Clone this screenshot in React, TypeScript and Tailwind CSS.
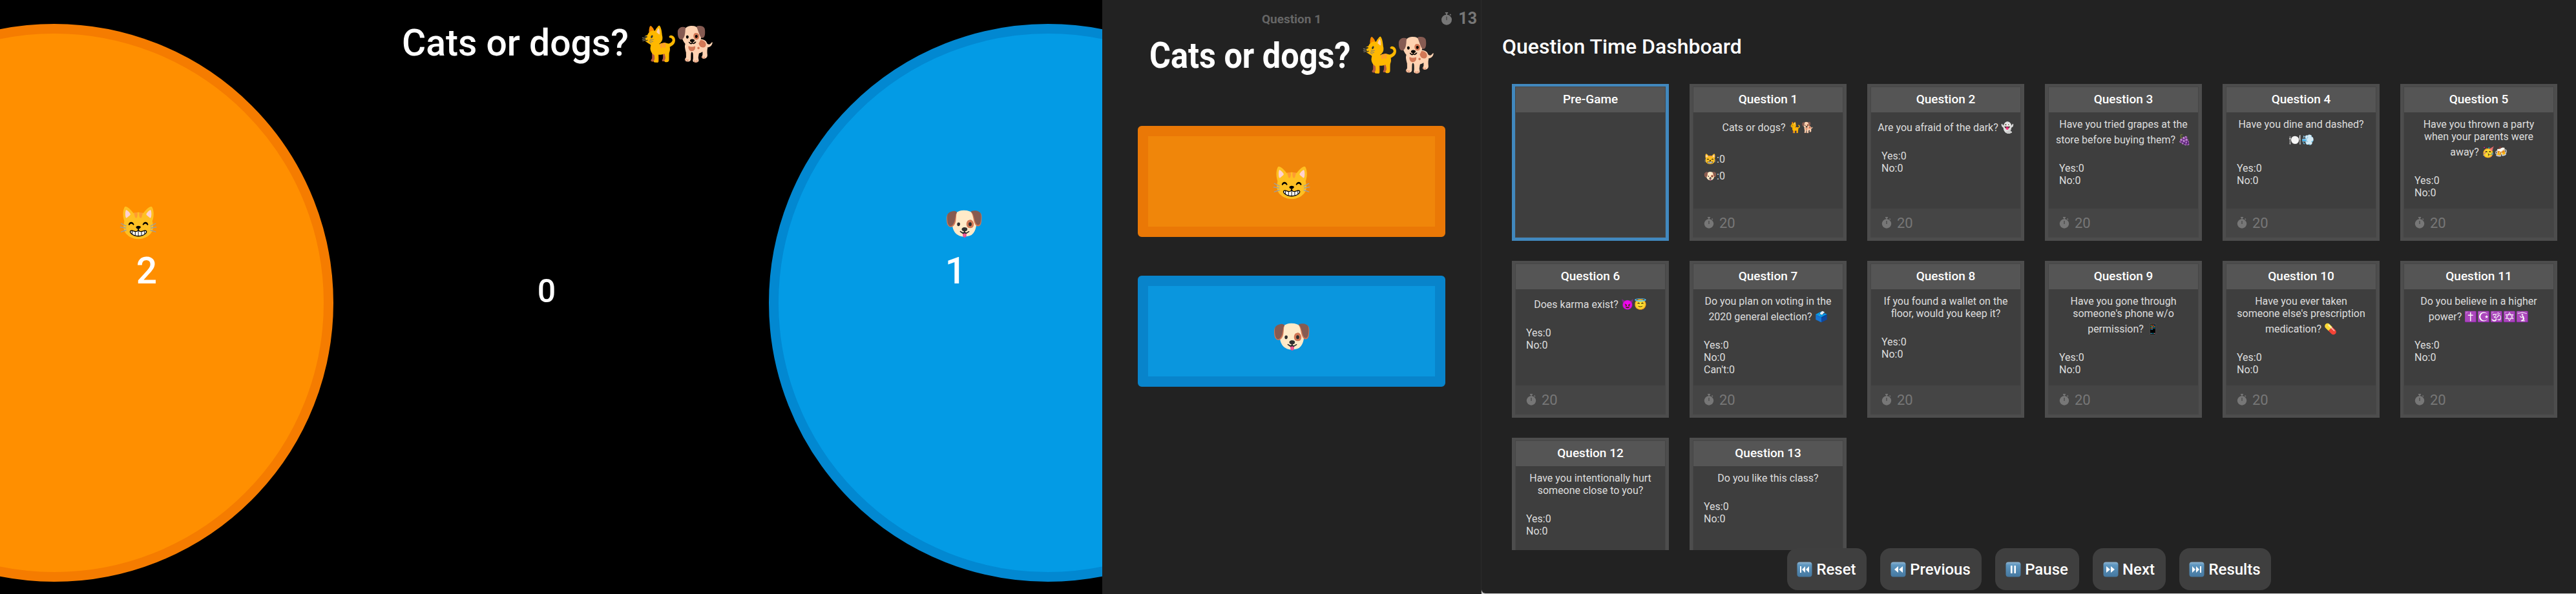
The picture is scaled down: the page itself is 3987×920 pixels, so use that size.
type Question = {
  title: string
  text: string
  emoji?: string
  options: string[]
}

const QUESTIONS: Question[] = [
  { title: 'Pre-Game', text: '', options: [] },
  { title: 'Question 1', text: 'Cats or dogs?', emoji: '🐈🐕', options: ['😸', '🐶'] },
  { title: 'Question 2', text: 'Are you afraid of the dark?', emoji: '👻', options: ['Yes', 'No'] },
  { title: 'Question 3', text: 'Have you tried grapes at the store before buying them?', emoji: '🍇', options: ['Yes', 'No'] },
  { title: 'Question 4', text: 'Have you dine and dashed?', emoji: '🍽️💨', options: ['Yes', 'No'] },
  { title: 'Question 5', text: 'Have you thrown a party when your parents were away?', emoji: '🥳🍻', options: ['Yes', 'No'] },
  { title: 'Question 6', text: 'Does karma exist?', emoji: '😈😇', options: ['Yes', 'No'] },
  { title: 'Question 7', text: 'Do you plan on voting in the 2020 general election?', emoji: '🗳️', options: ['Yes', 'No', "Can't"] },
  { title: 'Question 8', text: 'If you found a wallet on the floor, would you keep it?', options: ['Yes', 'No'] },
  { title: 'Question 9', text: "Have you gone through someone's phone w/o permission?", emoji: '📱', options: ['Yes', 'No'] },
  { title: 'Question 10', text: "Have you ever taken someone else's prescription medication?", emoji: '💊', options: ['Yes', 'No'] },
  { title: 'Question 11', text: 'Do you believe in a higher power?', emoji: '✝️☪️🕉️✡️🛐', options: ['Yes', 'No'] },
  { title: 'Question 12', text: 'Have you intentionally hurt someone close to you?', options: ['Yes', 'No'] },
  { title: 'Question 13', text: 'Do you like this class?', options: ['Yes', 'No'] },
]

function Stopwatch({ size }: { size: number }) {
  return (
    <svg width={size} height={size} viewBox="0 0 18 18" className="shrink-0">
      <rect x="7" y="0" width="4" height="1.6" fill="currentColor" />
      <rect x="8.2" y="1" width="1.6" height="2.6" fill="currentColor" />
      <rect x="13.2" y="2.6" width="2" height="1.6" rx="0.5" transform="rotate(40 14.2 3.4)" fill="currentColor" />
      <circle cx="9" cy="10.5" r="7.2" fill="currentColor" />
      <rect x="8.5" y="6" width="1" height="5" fill="#3a3a3a" />
    </svg>
  )
}

// media key icon, the blue square in front of the dashboard controls
function MediaKey({ kind }: { kind: 'reset' | 'prev' | 'pause' | 'next' | 'results' }) {
  return (
    <svg width="24" height="24" viewBox="0 0 24 24" className="shrink-0">
      <defs>
        <linearGradient id={`key-${kind}`} x1="0" y1="0" x2="0" y2="1">
          <stop offset="0" stopColor="#8fb4d0" />
          <stop offset="0.2" stopColor="#5f97c0" />
          <stop offset="1" stopColor="#44779f" />
        </linearGradient>
      </defs>
      <rect x="0.5" y="0.5" width="23" height="23" rx="4" fill={`url(#key-${kind})`} />
      {kind === 'reset' && <path d="M5 7h2v10H5zM13 7v10l-5-5zM19 7v10l-5-5z" fill="#fff" />}
      {kind === 'prev' && <path d="M12 7v10l-6-5zM19 7v10l-6-5z" fill="#fff" />}
      {kind === 'pause' && <path d="M8 6h2.6v12H8zM13.4 6H16v12h-2.6z" fill="#fff" />}
      {kind === 'next' && <path d="M5 7v10l6-5zM12 7v10l6-5z" fill="#fff" />}
      {kind === 'results' && <path d="M5 7v10l5-5zM11 7v10l5-5zM17 7h2v10h-2z" fill="#fff" />}
    </svg>
  )
}

function QuestionCard({ q, active }: { q: Question; active?: boolean }) {
  const isPre = q.title === 'Pre-Game'
  return (
    <div className={`h-[243px] border-[5px] border-t-4 ${active ? 'border-[#4188be]' : 'border-[#4d4d4d]'}`}>
      <div className="flex h-full flex-col border border-[#464646] bg-[#3e3e3e]">
        <div className="flex h-[39px] shrink-0 items-center justify-center bg-[#555555] text-[19px] font-medium text-white">
          {q.title}
        </div>
        <div className="flex-1 overflow-hidden px-[10px] pt-[9px] text-[16px] leading-[19px] text-[#dddddd]">
          {q.text && (
            <p className="mb-[25px] text-center">
              {q.text}{' '}
              {q.emoji && (
                <span className="whitespace-nowrap">
                  {/* emoji lines sit 5px taller than plain lines */}
                  <span className="inline-block h-[20px] w-0" />
                  {q.emoji}
                </span>
              )}
            </p>
          )}
          <div className="pl-[6px]">
            {q.options.map(o =>
              o === '😸' || o === '🐶' ? (
                <div key={o} className="h-[26px] translate-y-[2px] leading-[26px]">{o}:0</div>
              ) : (
                <div key={o}>{o}:0</div>
              ),
            )}
          </div>
        </div>
        {!isPre && (
          <div className="flex h-[44px] shrink-0 items-center gap-[7px] bg-[#454545] pl-[15px] text-[22px] text-[#777777]">
            <Stopwatch size={18} />
            <span>20</span>
          </div>
        )}
      </div>
    </div>
  )
}

function Circle({ color, emoji, count, side }: { color: string; emoji: string; count: number; side: 'left' | 'right' }) {
  return (
    <div
      className={`flex h-[864px] w-[864px] shrink-0 flex-col items-center justify-center rounded-full border-[15px] pb-[172px] ${color} ${
        side === 'left' ? 'pl-[260px]' : 'pr-[260px]'
      }`}
    >
      <span className="text-[50px] leading-[60px]">{emoji}</span>
      <span className={`mt-[14px] text-[57px] leading-[60px] font-medium ${side === 'left' ? 'ml-[26px]' : 'mr-[26px]'}`}>{count}</span>
    </div>
  )
}

const CONTROLS = [
  { kind: 'reset', label: 'Reset', width: 'w-[123px]' },
  { kind: 'prev', label: 'Previous', width: 'w-[157px]' },
  { kind: 'pause', label: 'Pause', width: 'w-[130px]' },
  { kind: 'next', label: 'Next', width: 'w-[113px]' },
  { kind: 'results', label: 'Results', width: 'w-[142px]' },
] as const

export default function App() {
  return (
    <div className="flex h-[920px] w-[3987px] overflow-hidden bg-[#cccccc] font-['Roboto',sans-serif] text-white">

      {/* results screen */}
      <div className="relative flex h-full w-[1706px] shrink-0 items-center justify-center overflow-hidden bg-black pt-[18px]">
        <h1 className="absolute top-[33px] left-[622px] text-[57px] leading-[68px] font-medium whitespace-nowrap">
          Cats or dogs?
          <span className="ml-[14px] text-[52px] tracking-[-7px]">🐈🐕</span>
        </h1>
        <Circle color="border-[#f57c00] bg-[#ff8f00]" emoji="😸" count={2} side="left" />
        <div className="flex w-[674px] shrink-0 justify-center pr-[14px] pb-[36px] text-[50px] font-medium">0</div>
        <Circle color="border-[#0288d1] bg-[#039be5]" emoji="🐶" count={1} side="right" />
      </div>

      {/* player view */}
      <div className="flex h-full w-[587px] shrink-0 flex-col border-r border-[#2b2b2b] bg-[#222222]">
        <div className="relative flex h-[44px] shrink-0 items-center justify-center pt-[16px] text-[19px] font-bold text-[#666666]">
          Question 1
          <div className="absolute top-[16px] right-[6px] flex items-center gap-[8px] text-[25px] leading-[26px] text-[#777777]">
            <Stopwatch size={20} />
            <span>13</span>
          </div>
        </div>
        <h2 className="mt-[9px] flex items-center justify-center text-[56px] leading-[66px] font-bold whitespace-nowrap">
          <span className="inline-block w-[310px] origin-left scale-x-[0.9]">Cats or dogs?</span>
          <span className="ml-[14px] text-[52px] tracking-[-7px]">🐈🐕</span>
        </h2>
        <div className="mt-[76px] flex flex-col gap-[60px] px-[55px]">
          <div className="flex h-[172px] items-center justify-center rounded-[6px] border-[16px] border-[#ea7806] bg-[#f0860a] pt-[6px] text-[50px]">😸</div>
          <div className="flex h-[172px] items-center justify-center rounded-[6px] border-[16px] border-[#0884cb] bg-[#0a96de] pt-[16px] text-[50px]">🐶</div>
        </div>
      </div>

      {/* dashboard */}
      <div className="flex h-[919px] min-w-0 flex-1 flex-col rounded-bl-[6px] bg-[#222222]">
        <h2 className="mt-[53px] ml-[32px] text-[32px] leading-[38px] font-medium">Question Time Dashboard</h2>
        <div className="mt-[39px] h-[722px] shrink-0 overflow-hidden pl-[47px]">
          <div className="grid w-[1618px] grid-cols-6 gap-x-[32px] gap-y-[31px]">
            {QUESTIONS.map((q, i) => (
              <QuestionCard key={q.title} q={q} active={i === 0} />
            ))}
          </div>
        </div>
        <div className="relative -mt-[3px] flex justify-center gap-[21px]">
          {CONTROLS.map(c => (
            <button
              key={c.label}
              className={`flex h-[65px] items-center justify-center gap-[6px] rounded-[16px] bg-[#3f3f3f] text-[24px] font-medium text-white ${c.width}`}
            >
              <MediaKey kind={c.kind} />
              {c.label}
            </button>
          ))}
        </div>
      </div>
    </div>
  )
}
